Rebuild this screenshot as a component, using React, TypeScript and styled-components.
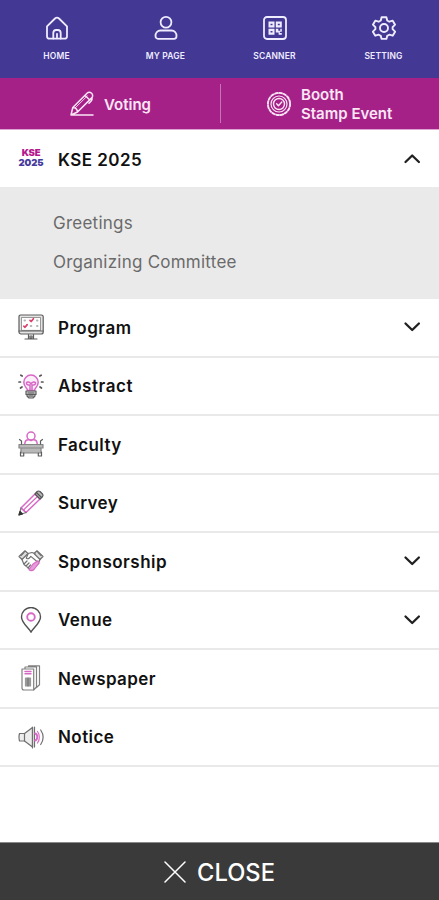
import React from "react";
import styled, { createGlobalStyle } from "styled-components";

const GlobalStyle = createGlobalStyle`
  * { box-sizing: border-box; }
  body { margin: 0; background: #fff; font-family: Inter, "Liberation Sans", sans-serif; }
  button { font: inherit; border: 0; padding: 0; margin: 0; background: none; color: inherit; }
`;

const Page = styled.div`
  width: 100%;
  height: 900px;
  display: flex;
  flex-direction: column;
  overflow: hidden;
  background: #fff;
`;

const TopBar = styled.nav`
  display: grid;
  grid-template-columns: repeat(4, 1fr);
  flex: none;
  height: 78px;
  padding: 15px 1px 0 2px;
  background: #433894;
  color: #efecff;
`;

const TopItem = styled.button`
  display: flex;
  flex-direction: column;
  align-items: center;
  justify-content: flex-start;
`;

const TopLabel = styled.span<{ $spacing: number }>`
  margin-top: 9px;
  font-size: 8.5px;
  line-height: 12px;
  font-weight: 600;
  letter-spacing: ${(p) => p.$spacing}px;
`;

const ActionBar = styled.div`
  display: grid;
  grid-template-columns: 220px 1px 1fr;
  align-items: center;
  flex: none;
  height: 52px;
  background: #a52188;
  border-bottom: 1px solid #dda6d2;
  color: #fbe6f6;
`;

const Action = styled.button<{ $indent: number; $gap: number }>`
  display: flex;
  align-items: center;
  min-width: 0;
  gap: ${(p) => p.$gap}px;
  padding-left: ${(p) => p.$indent}px;
  text-align: left;
`;

const ActionText = styled.span`
  padding-top: 1px;
  font-size: 15px;
  line-height: 19px;
  font-weight: 600;
  white-space: nowrap;
`;

const Divider = styled.span`
  height: 39px;
  background: #c873b6;
`;

const Row = styled.button<{ $first?: boolean }>`
  display: flex;
  align-items: center;
  flex: none;
  width: 100%;
  height: ${(p) => (p.$first ? 57 : 58.5)}px;
  padding: ${(p) => (p.$first ? 1 : 0)}px 17px 0 18px;
  border-bottom: ${(p) => (p.$first ? "0" : "2px solid #e9e9e9")};
  color: #111;
  text-align: left;
`;

const IconSlot = styled.span`
  display: flex;
  width: 26px;
  height: 26px;
  margin-right: 14px;
`;

const RowLabel = styled.span<{ $spacing: number }>`
  flex: 1;
  padding-top: 1px;
  font-size: 17px;
  font-weight: 600;
  line-height: 24px;
  letter-spacing: ${(p) => p.$spacing}px;
`;

const SubMenu = styled.div`
  display: flex;
  flex-direction: column;
  flex: none;
  height: 112px;
  padding: 17px 0 0 53px;
  background: #eaeaea;
`;

const SubLink = styled.span`
  font-size: 17px;
  line-height: 39px;
  letter-spacing: 0.24px;
  color: #6a6a6a;
`;

const Spacer = styled.div`
  flex: 1;
`;

const CloseBar = styled.button`
  display: flex;
  align-items: center;
  justify-content: center;
  flex: none;
  gap: 11px;
  height: 58px;
  padding-top: 1px;
  border-top: 1px solid #8a8a8a;
  background: #3a3a3a;
  color: #fff;
`;

const CloseText = styled.span`
  padding-top: 1px;
  font-size: 23.700px;
  line-height: 28px;
  font-weight: 500;
`;

const Logo = styled.span`
  display: flex;
  flex-direction: column;
  align-items: center;
  justify-content: center;
  width: 26px;
  margin-top: -3px;
  font-weight: 900;
`;

const LogoTop = styled.span`
  color: #b5178c;
  font-size: 9.5px;
  line-height: 10px;
  letter-spacing: -0.2px;
`;

const LogoBottom = styled.span`
  color: #453a9c;
  font-size: 9.5px;
  line-height: 10px;
  letter-spacing: -0.1px;
`;

const ink = "#5d5d5d";
const pink = "#d868c6";

type SvgProps = { children: React.ReactNode; size?: number; color?: string; width?: number };
const Svg = ({ children, size = 26, color = ink, width = 1.2 }: SvgProps) => (
  <svg width={size} height={size} viewBox="0 0 26 26" fill="none" stroke={color}
    strokeWidth={width} strokeLinecap="round" strokeLinejoin="round">{children}</svg>
);

const HomeIcon = () => (
  <Svg color="currentColor" width={1.8}>
    <path d="M3 11.300 11 3.500a3 3 0 0 1 4 0l8 7.800V21.200a2.500 2.500 0 0 1-2.500 2.500h-15A2.500 2.500 0 0 1 3 21.200Z" />
    <path d="M9.300 23.500V18a3 3 0 0 1 3-3h1.400a3 3 0 0 1 3 3v5.500M13 18.800v4.500" />
  </Svg>
);
const UserIcon = () => (
  <Svg color="currentColor" width={1.8}>
    <circle cx="13" cy="7.300" r="5.400" />
    <path d="M7.500 15.500h11c3 0 5 2.600 5 5.400 0 1.800-1 2.900-2.500 2.900H5c-1.500 0-2.500-1.100-2.500-2.900 0-2.800 2-5.400 5-5.400Z" />
  </Svg>
);
const ScannerIcon = () => (
  <Svg color="currentColor" width={1.8}>
    <rect x="2" y="2" width="22" height="22" rx="3" />
    <g fill="currentColor" stroke="none" fillRule="evenodd">
      <path d="M6.500 6.500h6v6h-6Zm2 2.200v1.600h2V8.700ZM13.800 6.500h6v6h-6Zm2 2.200v1.600h2V8.700ZM6.500 13.800h6v6h-6Zm2 2.200v1.600h2V16Z" />
      <path d="M13.800 13.800h2.500v2h2v-2h1.500v3h-2v1.200h2v1.800h-3.200v-2.200h-2.800Z" />
    </g>
  </Svg>
);
const GearIcon = () => (
  <Svg color="currentColor" width={1.9}>
    <path d="m10.600 2.200-.8 3.300-2.100 1.200-3.400-1-2.400 4 2.500 2.500v2l-2.500 2.500 2.400 4 3.400-1 2.100 1.200.8 3h4.800l.8-3 2.100-1.200 3.400 1 2.400-4-2.500-2.500v-2l2.500-2.500-2.400-4-3.400 1-2.100-1.200-.8-3.300Z" />
    <circle cx="13" cy="13" r="4" />
  </Svg>
);
const VoteIcon = () => (
  <Svg color="currentColor" width={1.5}>
    <path d="m2 24 1.800-7.500L18 2.300c1.400-1.400 3.300-1.200 4.600 0s1.400 3.200.1 4.600L8.500 21ZM3.800 16.500c2.700.2 4.500 2 4.700 4.500M16 4.300l4.700 4.700M22.700 6.900q1 1.600-.7 3.300l-2 2M2 24h22" />
    <path d="M6.300 16.800 18.200 5" strokeWidth=".9" />
  </Svg>
);
const StampIcon = () => (
  <Svg color="currentColor" width={1.4}>
    <circle cx="13" cy="13" r="11.200" strokeWidth="1.700" strokeDasharray="2.600 1.800" />
    <circle cx="13" cy="13" r="10.800" strokeWidth=".8" />
    <circle cx="13" cy="13" r="8" strokeWidth="1.200" /><circle cx="13" cy="13" r="5.500" />
    <path d="m10.600 12.800 1.900 1.900 3.300-3.700" />
  </Svg>
);
const ProgramIcon = () => (
  <Svg>
    <path d="M2.500 1h21A1.700 1.700 0 0 1 25.200 3v15a2 2 0 0 1-2 2H3a2 2 0 0 1-2-2V3A1.700 1.700 0 0 1 2.500 1Z" fill="#e4e4e4" />
    <path d="M3.500 16V3.500h19V16Z" fill="#fff" strokeWidth=".6" />
    <path d="M1 17h24M10.500 20.500v4m5-4v4M7 25h12M12 22h2v2h-2Z" />
    <path d="M6.500 6.500h.5m12 0h.5M12.700 12h.6m5.700 0h.5" stroke="#b4b4b4" strokeWidth="2" />
    <path d="m12 6.300 1.200 1.200 2.200-2.800m-9.600 7.500L7 13.300l2.200-2.700" stroke="#dd3f6c" strokeWidth="1.700" />
  </Svg>
);
const BulbIcon = () => (
  <Svg>
    <path d="M9.500 17.500c0-2.500-3.700-3.800-3.700-8.200a7.200 7.200 0 1 1 14.400 0c0 4.400-3.700 5.700-3.700 8.200Z" stroke={pink} fill="#faeef9" strokeWidth="1.500" />
    <path d="M12 17v-5c-1.200.2-3.800-.1-3.600-1.800.2-1.800 3.500-1.500 4.600.8 1.100-2.300 4.400-2.600 4.600-.8.200 1.700-2.400 2-3.600 1.800v5" stroke={pink} strokeWidth="1.500" />
    <path d="M8 18h10v3.500H8Zm1 3.500h8V23l-2 2h-4l-2-2Z" fill="#c8c8c8" />
    <path d="M10 20h6m-5 3h4" stroke="#555" />
    <path d="m4.200 3-1.400-.8M2.500 9H1m3 5-1.500 1M21.800 3l1.400-.8M23.500 9H25m-3 5 1.500 1" stroke="#555" strokeWidth="1.700" />
  </Svg>
);
const FacultyIcon = () => (
  <Svg>
    <circle cx="13" cy="5" r="4" stroke={pink} strokeWidth="1.500" />
    <path d="M6.800 13c0-3 1.500-4.500 4.200-4.300l2 1 2-1c2.700-.2 4.200 1.300 4.200 4.300" stroke={pink} strokeWidth="1.500" />
    <path d="M1 13.500h24v3.500H1Zm2 3.500h20v5H3Z" fill="#b8b8b8" stroke="#858585" />
    <path d="M1.500 8.500 3.500 10v3M24.500 8.500 22.500 10v3M2.500 21v4h3.200v-3m14.600 0v3h3.200v-4" />
  </Svg>
);
const PencilIcon = () => (
  <Svg>
    <path d="m3 18 14-14 5 5L8 22.500Z" stroke={pink} strokeWidth="1.500" />
    <path d="m5.500 20 14-13.500M3 18l5 4.500" stroke={pink} />
    <path d="m17 4 2.200-2.500q1.300-1 2.800 0L24.500 4q1 1.300 0 2.700L22 9Z" fill="#b9b9b9" stroke="#555" />
    <path d="m18.400 2.500 5.100 5" stroke="#555" />
    <path d="M3 18 1 25l7-2.500" stroke="#777" />
    <path d="m1 25 1-3.500 2.500 2.500Z" fill="#333" stroke="#333" />
  </Svg>
);
const HandshakeIcon = () => (
  <Svg color="#707070">
    <path d="m1 8.500 6-5.700 3 2.700-6 6Zm24 0-6-5.700-3 2.700 6 6Z" fill="#ddd" />
    <path d="m3 7.500 3-3m17 3-3-3M10 5.500l4-1 3 1M4 11.500l2 5L13 22l7-6 2-4.500M10 6 8.300 10c1.500 1.500 3 .6 4.500-1.600l8 6.600M6 16l3-3m-1 5 3-3m-1 5 2.500-3" />
    <path d="m11 21.500 4-5.500 5-3.200 1 2.200-5 6.500c-1.700 1.600-3.700 1.600-5 0Z" stroke={pink} fill="#e59bda" />
  </Svg>
);
const PinIcon = () => (
  <Svg color="#505050" width={1.4}>
    <path d="M13 25.200C11 21 3.500 16 3.500 10a9.500 9.500 0 0 1 19 0c0 6-7.500 11-9.500 15.200Z" />
    <circle cx="13" cy="10" r="3.800" stroke={pink} strokeWidth="1.900" />
  </Svg>
);
const PaperIcon = () => (
  <Svg color="#808080">
    <path d="M4.500 4h11.200v21H6q-2 0-2-2V4ZM7 4V2h11.500v20l-2.800 3M10.500 2V.8h11v19l-3 2.700" />
    <path d="M7 6.500h6M7 8.800h6" stroke={pink} strokeWidth="1.500" />
    <path d="M7.500 13h5v8h-5Z" fill="#999" stroke="#999" />
    <path d="M10 13v8" stroke="#777" />
  </Svg>
);
const SpeakerIcon = () => (
  <Svg color="#707070">
    <path d="M1.500 9.500Q.5 13 1.500 17h5l8 6V3.500l-8 6Z" fill="#eee" />
    <path d="M6.500 9.500V17M14.500 3v21M16.500 3v20" />
    <path d="M17 9.500c3 .5 3 6.500 0 7" stroke={pink} strokeWidth="1.800" />
    <path d="M19.500 7.500c2.400 3 2.400 8.500 0 11.500" stroke={pink} />
    <path d="M22.700 6c3 4.500 3 10 0 14.500" />
  </Svg>
);

const Chevron = ({ up = false }: { up?: boolean }) => (
  <svg width="20" height="20" viewBox="0 0 20 20" fill="none" stroke="#202020" strokeWidth="2.300" strokeLinecap="round" strokeLinejoin="round">
    <path d={up ? "m3.500 13 6.700-6.500 6.700 6.500" : "m3.500 6.500 6.700 6.500 6.700-6.500"} />
  </svg>
);

const shortcuts = [
  { label: "HOME", Icon: HomeIcon, spacing: 0.2 },
  { label: "MY PAGE", Icon: UserIcon, spacing: 0.15 },
  { label: "SCANNER", Icon: ScannerIcon, spacing: 0.15 },
  { label: "SETTING", Icon: GearIcon, spacing: 0.15 },
];

const menu = [
  { label: "Program", Icon: ProgramIcon, spacing: 0.5, more: true },
  { label: "Abstract", Icon: BulbIcon, spacing: 0.55 },
  { label: "Faculty", Icon: FacultyIcon, spacing: 0.4 },
  { label: "Survey", Icon: PencilIcon, spacing: 0.35 },
  { label: "Sponsorship", Icon: HandshakeIcon, spacing: 0.5, more: true },
  { label: "Venue", Icon: PinIcon, spacing: 0.45, more: true },
  { label: "Newspaper", Icon: PaperIcon, spacing: 0.4 },
  { label: "Notice", Icon: SpeakerIcon, spacing: 0.45 },
];

export default function App() {
  return (
    <Page>
      <GlobalStyle />
      <TopBar>
        {shortcuts.map(({ label, Icon, spacing }) => (
          <TopItem key={label}>
            <Icon />
            <TopLabel $spacing={spacing}>{label}</TopLabel>
          </TopItem>
        ))}
      </TopBar>
      <ActionBar>
        <Action $indent={69} $gap={9}>
          <VoteIcon />
          <ActionText>Voting</ActionText>
        </Action>
        <Divider />
        <Action $indent={45} $gap={9}>
          <StampIcon />
          <ActionText>Booth<br />Stamp Event</ActionText>
        </Action>
      </ActionBar>
      <Row $first>
        <IconSlot>
          <Logo><LogoTop>KSE</LogoTop><LogoBottom>2025</LogoBottom></Logo>
        </IconSlot>
        <RowLabel $spacing={0.45}>KSE 2025</RowLabel>
        <Chevron up />
      </Row>
      <SubMenu>
        <SubLink>Greetings</SubLink>
        <SubLink>Organizing Committee</SubLink>
      </SubMenu>
      {menu.map(({ label, Icon, spacing, more }) => (
        <Row key={label}>
          <IconSlot><Icon /></IconSlot>
          <RowLabel $spacing={spacing}>{label}</RowLabel>
          {more && <Chevron />}
        </Row>
      ))}
      <Spacer />
      <CloseBar>
        <svg width="22" height="22" viewBox="0 0 22 22" stroke="currentColor" strokeWidth="1.500" strokeLinecap="round">
          <path d="m1 1 20 20M21 1 1 21" />
        </svg>
        <CloseText>CLOSE</CloseText>
      </CloseBar>
    </Page>
  );
}
